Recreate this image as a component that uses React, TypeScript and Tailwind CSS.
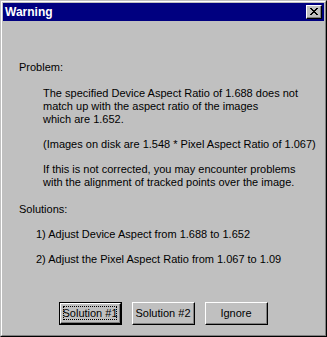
import React from 'react';

const font = { fontFamily: '"Liberation Sans", Arial, sans-serif' };

interface BtnProps {
  label: string;
  isDefault?: boolean;
}

const Win95Button: React.FC<BtnProps> = ({ label, isDefault }) => {
  if (isDefault) {
    return (
      <div className="w-[63px] h-[23px] border border-black">
        <div className="h-full border-t border-l border-white border-r border-b border-r-black border-b-black">
          <div className="h-full border-r border-b border-[#808080] flex items-center justify-center p-[2px]">
            <div className="w-full h-full border border-dotted border-black flex items-center justify-center text-[11px] leading-none text-black whitespace-nowrap">
              {label}
            </div>
          </div>
        </div>
      </div>
    );
  }
  return (
    <div className="w-[63px] h-[23px] border-t border-l border-white border-r border-b border-r-black border-b-black">
      <div className="h-full border-r border-b border-[#808080] flex items-center justify-center text-[11px] leading-none text-black whitespace-nowrap">
        {label}
      </div>
    </div>
  );
};

const Line: React.FC<{ children: React.ReactNode; className?: string }> = ({ children, className }) => (
  <div className={`h-[13px] leading-[13px] whitespace-nowrap ${className ?? ''}`}>{children}</div>
);

export default function App() {
  return (
    <div className="w-[327px] h-[337px] bg-[#c0c0c0]" style={font}>
      <div className="w-full h-full border-t border-l border-[#c0c0c0] border-r border-b border-r-black border-b-black">
        <div className="w-full h-full border-t border-l border-white border-r border-b border-r-[#808080] border-b-[#808080] p-px flex flex-col">
          {/* title bar */}
          <div className="h-[18px] bg-[#000080] flex items-center justify-between pl-[2px] pr-[2px]">
            <span className="text-white font-bold text-[12px] leading-none">Warning</span>
            <div className="w-[16px] h-[14px] bg-[#c0c0c0] border-t border-l border-white border-r border-b border-r-black border-b-black">
              <div className="w-full h-full border-r border-b border-[#808080] flex items-center justify-center">
                <svg width="8" height="7" viewBox="0 0 8 7" shapeRendering="crispEdges">
                  <path d="M0 0h2v1h-2zM6 0h2v1h-2zM1 1h2v1h-2zM5 1h2v1h-2zM2 2h4v1h-4zM3 3h2v1h-2zM2 4h4v1h-4zM1 5h2v1h-2zM5 5h2v1h-2zM0 6h2v1h-2zM6 6h2v1h-2z" fill="#000" />
                </svg>
              </div>
            </div>
          </div>

          {/* body */}
          <div className="flex-1 flex flex-col pl-[16px] text-[11px] text-black">
            <Line className="mt-[40px]">Problem:</Line>
            <div className="pl-[24px] mt-[13px]">
              <Line>The specified Device Aspect Ratio of 1.688 does not</Line>
              <Line>match up with the aspect ratio of the images</Line>
              <Line>which are 1.652.</Line>
              <Line className="mt-[12px]">(Images on disk are 1.548 * Pixel Aspect Ratio of 1.067)</Line>
              <Line className="mt-[12px]">If this is not corrected, you may encounter problems</Line>
              <Line>with the alignment of tracked points over the image.</Line>
            </div>
            <Line className="mt-[14px]">Solutions:</Line>
            <div className="pl-[17px]">
              <Line className="mt-[12px]">1) Adjust Device Aspect from 1.688 to 1.652</Line>
              <Line className="mt-[12px]">2) Adjust the Pixel Aspect Ratio from 1.067 to 1.09</Line>
            </div>
            <div className="mt-[36px] flex gap-[10px] pl-[40px]">
              <Win95Button label="Solution #1" isDefault />
              <Win95Button label="Solution #2" />
              <Win95Button label="Ignore" />
            </div>
          </div>
        </div>
      </div>
    </div>
  );
}
